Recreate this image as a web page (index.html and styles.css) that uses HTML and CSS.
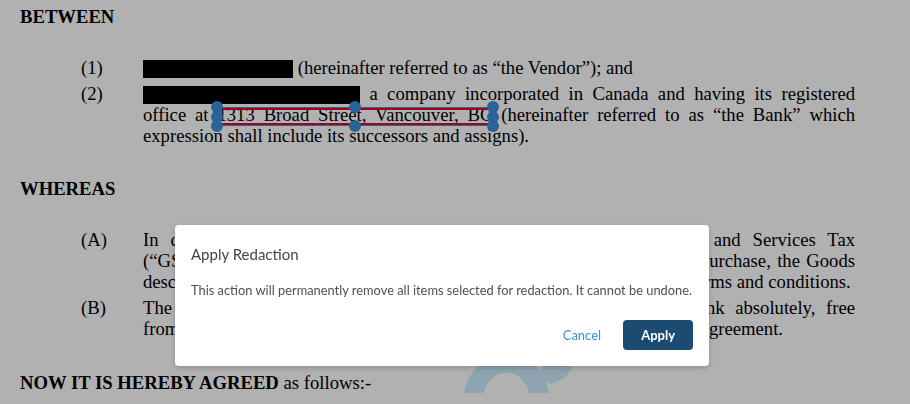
FILE: index.html
```html
<!DOCTYPE html>
<html lang="en">
<head>
<meta charset="utf-8">
<title>Apply Redaction</title>
<link rel="stylesheet" href="styles.css">
</head>
<body>
<main class="doc">
  <svg class="watermark" width="180" height="110" viewBox="0 0 180 110" aria-hidden="true">
    <ellipse cx="66" cy="102" rx="33.5" ry="39" transform="rotate(4 66 102)" fill="none" stroke="#cdedff" stroke-width="19"/>
    <polygon points="96,74 118,50 140,50 133,66 125,78 110,84" fill="#cdedff"/>
  </svg>

  <h2 class="heading first">BETWEEN</h2>
  <ol class="clauses">
    <li class="clause">
      <span class="num">(1)</span>
      <p class="text"><span class="redact r1"></span> (hereinafter referred to as “the Vendor”); and</p>
    </li>
    <li class="clause">
      <span class="num">(2)</span>
      <p class="text"><span class="redact r2"></span> a company incorporated in Canada and having its registered office at <span class="sel">1313 Broad Street, Vancouver, BC<span class="sel-box"><i class="h tl"></i><i class="h ml"></i><i class="h bl"></i><i class="h tm"></i><i class="h bm"></i><i class="h tr"></i><i class="h mr"></i><i class="h br"></i></span></span> (hereinafter referred to as “the Bank” which expression shall include its successors and assigns).</p>
    </li>
  </ol>

  <h2 class="heading">WHEREAS</h2>
  <ol class="clauses">
    <li class="clause">
      <span class="num">(A)</span>
      <p class="text lines">
        <span class="ln">In consideration of the sum of the Purchase Price and the Goods and Services Tax</span>
        <span class="ln">(“GST”) thereon paid by the Bank to the Vendor at the time of the said purchase, the Goods</span>
        <span class="ln last">described in the Schedule hereto are sold to the Bank upon the following terms and conditions.</span>
      </p>
    </li>
    <li class="clause">
      <span class="num">(B)</span>
      <p class="text lines">
        <span class="ln">The Vendor hereby sells, assigns and transfers the Goods to the Bank absolutely, free</span>
        <span class="ln last">from all liens, charges and encumbrances upon the terms as set out in this Agreement.</span>
      </p>
    </li>
  </ol>

  <p class="agreed"><b>NOW IT IS HEREBY AGREED</b> as follows:-</p>
</main>

<div class="overlay"></div>

<section class="dialog" role="dialog" aria-labelledby="dlg-title">
  <h3 class="dialog-title" id="dlg-title">Apply Redaction</h3>
  <p class="dialog-body">This action will permanently remove all items selected for redaction. It cannot be undone.</p>
  <div class="dialog-actions">
    <button class="btn-link" type="button">Cancel</button>
    <button class="btn-primary" type="button">Apply</button>
  </div>
</section>
</body>
</html>
```

FILE: styles.css
```css
html, body {
  margin: 0;
  padding: 0;
  background: #ffffff;
  overflow: hidden;
}

.doc {
  position: relative;
  z-index: 0;
  padding: 6px 55px 0 20px;
  font-family: "Liberation Serif", "Times New Roman", serif;
  font-size: 18.67px;
  line-height: 21px;
  color: #000;
}

.watermark {
  position: absolute;
  left: 440px;
  top: 300px;
  z-index: -1;
}

.heading {
  margin: 32px 0 30px;
  font-size: inherit;
  font-weight: bold;
  line-height: 21px;
}
.heading.first { margin-top: 0; }

.clauses {
  list-style: none;
  margin: 0;
  padding: 0 0 0 61px;
  display: flex;
  flex-direction: column;
  gap: 5px;
}

.clause {
  display: grid;
  grid-template-columns: 62px 1fr;
}

.text {
  margin: 0;
  text-align: justify;
}

.lines .ln {
  display: block;
  text-align: justify;
  text-align-last: justify;
}
.lines .ln.last { text-align-last: auto; }

.redact {
  display: inline-block;
  background: #000;
  height: 18px;
  vertical-align: -4px;
}
.r1 { width: 150px; }
.r2 { width: 217px; }

.sel { position: relative; }
.sel-box {
  position: absolute;
  left: 0;
  right: -1px;
  top: 3px;
  bottom: -1px;
  border: 1px solid #3d8fdb;
  box-shadow: inset 0 0 0 2px #ea0020;
}
.h {
  position: absolute;
  width: 12px;
  height: 12px;
  border-radius: 50%;
  background: #3d8fdb;
}
.tl, .tm, .tr { top: -7px; }
.ml, .mr { top: calc(50% - 6px); }
.bl, .bm, .br { bottom: -7px; }
.tl, .ml, .bl { left: -7px; }
.tr, .mr, .br { right: -7px; }
.tm, .bm { left: calc(50% - 6px); }

.agreed {
  margin: 33px 0 0;
}

.overlay {
  position: fixed;
  inset: 0;
  background: rgba(0, 0, 0, 0.306);
}

.dialog {
  position: fixed;
  left: 175px;
  top: 225px;
  width: 534px;
  box-sizing: border-box;
  padding: 20px 16px 16px;
  background: #fff;
  border-radius: 4px;
  box-shadow: 0 2px 6px rgba(0, 0, 0, 0.2);
  font-family: Lato, "Open Sans", sans-serif;
}

.dialog-title {
  margin: 0;
  font-size: 15px;
  font-weight: normal;
  line-height: 18px;
  color: #454545;
}

.dialog-body {
  margin: 19px 0 0;
  font-size: 12.85px;
  line-height: 16px;
  white-space: nowrap;
  color: #505050;
}

.dialog-actions {
  margin-top: 22px;
  display: flex;
  justify-content: flex-end;
  align-items: center;
  gap: 22px;
}

.btn-link {
  border: 0;
  background: none;
  padding: 0;
  font: 13px Lato, sans-serif;
  color: #3b8fd6;
}

.btn-primary {
  border: 0;
  height: 30px;
  padding: 0 18px;
  border-radius: 4px;
  background: #1b4a72;
  color: #fff;
  font: bold 13px Lato, sans-serif;
}
```
